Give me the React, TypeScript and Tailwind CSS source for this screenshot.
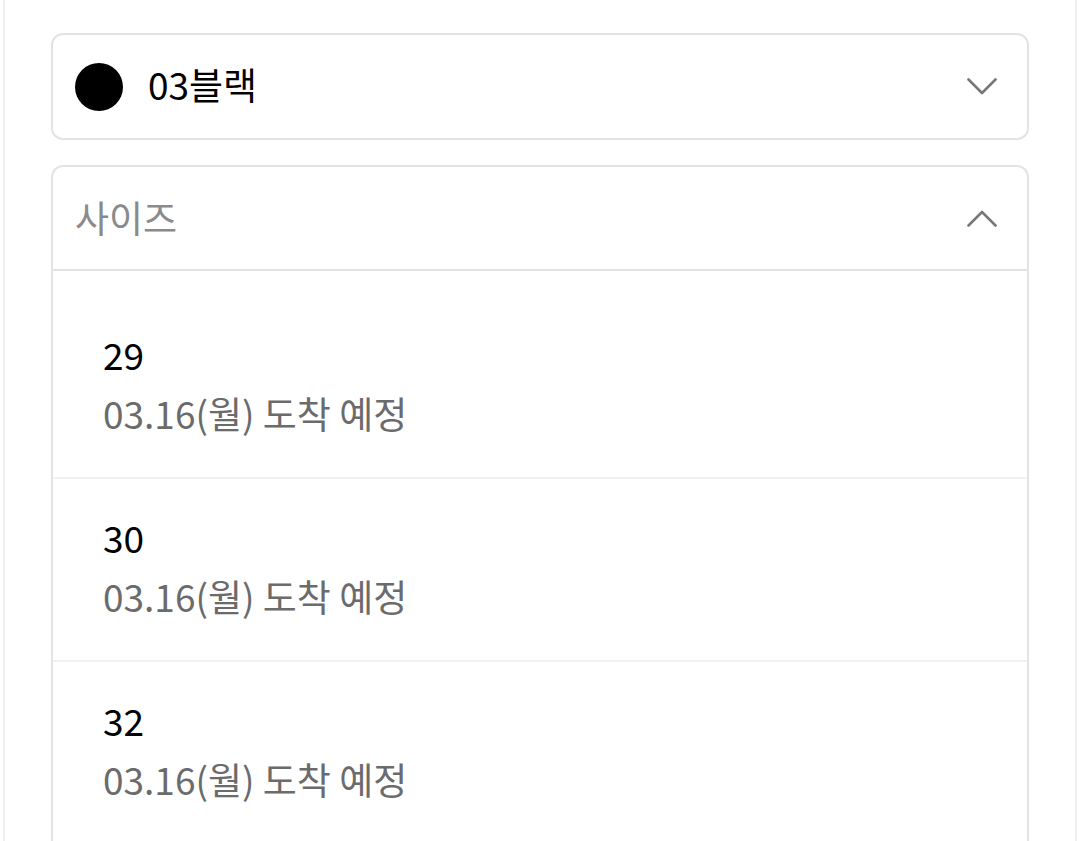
const sizes = [
  { size: '29', eta: '03.16(월) 도착 예정' },
  { size: '30', eta: '03.16(월) 도착 예정' },
  { size: '32', eta: '03.16(월) 도착 예정' },
];

function Chevron({ up }: { up?: boolean }) {
  return (
    <svg width="30" height="17" viewBox="0 0 30 17" fill="none" className="shrink-0">
      <polyline
        points={up ? '1.5,15.5 15,2 28.5,15.5' : '1.5,1.5 15,15 28.5,1.5'}
        stroke="#777777"
        strokeWidth="2.6"
        strokeLinecap="round"
        strokeLinejoin="round"
      />
    </svg>
  );
}

export default function App() {
  return (
    <div
      className="w-[1080px] h-[841px] overflow-hidden bg-white"
      style={{ fontFamily: '"Noto Sans CJK KR", "Noto Sans", sans-serif' }}
    >
      <div className="mx-[3px] h-full border-x-2 border-[#efefef] px-[46px] pt-[33px]">
        {/* color select */}
        <div className="flex h-[107px] items-center rounded-[12px] border-2 border-[#e3e3e3] pl-[22px] pr-[30px]">
          <div className="h-[48px] w-[48px] shrink-0 rounded-full bg-black" />
          <span className="ml-[25px] -mt-[6px] flex-1 text-[37px] leading-[40px] text-black">03블랙</span>
          <Chevron />
        </div>

        {/* size select */}
        <div className="mt-[25px] rounded-t-[12px] border-x-2 border-t-2 border-[#e3e3e3]">
          <div className="flex h-[104px] items-center border-b-2 border-[#e3e3e3] pl-[22px] pr-[30px]">
            <span className="-mt-[2px] flex-1 text-[37px] leading-[40px] text-[#8a8a8a]">사이즈</span>
            <Chevron up />
          </div>
          <div className="pt-[25px]">
            {sizes.map((s) => (
              <div
                key={s.size}
                className="flex flex-col gap-[19px] border-b-2 border-[#f1f1f1] pl-[50px] pt-[38px] pb-[44px]"
              >
                <span className="text-[37px] leading-[40px] text-black">{s.size}</span>
                <span className="text-[37px] leading-[40px] text-[#6b6b6b]">{s.eta}</span>
              </div>
            ))}
          </div>
        </div>
      </div>
    </div>
  );
}
